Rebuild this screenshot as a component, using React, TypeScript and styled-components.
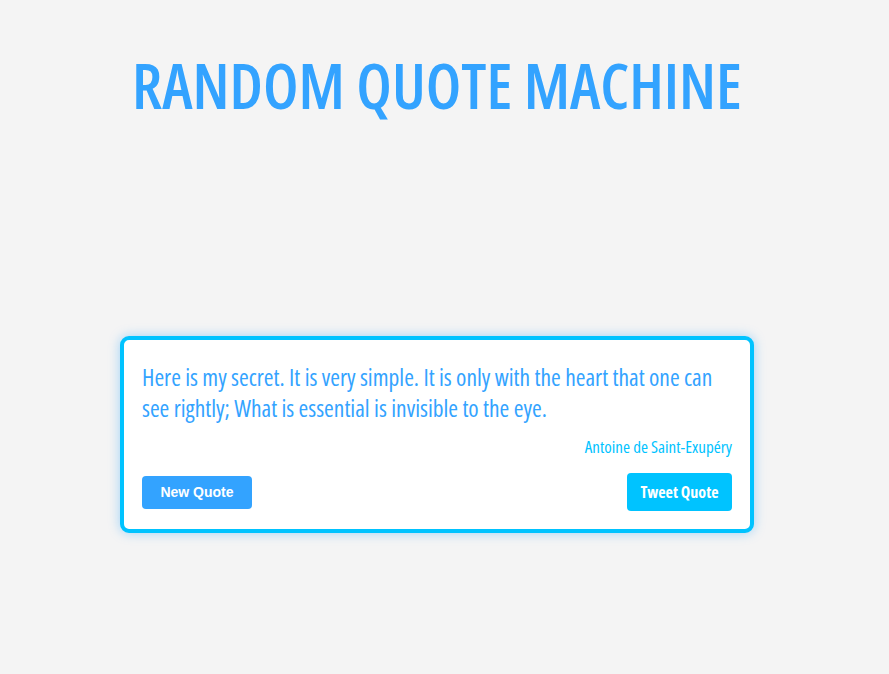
import styled, { createGlobalStyle } from "styled-components";

const quote = {
	text: "Here is my secret. It is very simple. It is only with the heart that one can see rightly; What is essential is invisible to the eye.",
	author: "Antoine de Saint-Exupéry",
};

const GlobalStyle = createGlobalStyle`
	html, body {
		margin: 0;
		padding: 0;
		background: #f4f4f4;
	}
	* {
		box-sizing: border-box;
	}
`;

const narrow = `"Open Sans", "Roboto", sans-serif`;

const Page = styled.main`
	width: 874px;
	min-height: 674px;
	display: flex;
	flex-direction: column;
	align-items: center;
	font-family: ${narrow};
	font-stretch: condensed;
`;

const Title = styled.h1`
	margin: 45px 0 0;
	font-size: 62.5px;
	font-weight: 600;
	line-height: 80px;
	letter-spacing: 0;
	color: #33a3ff;
`;

const Card = styled.section`
	margin-top: 211px;
	width: 634px;
	padding: 22px 18px 18px;
	background: #fff;
	border: 4px solid #00c3ff;
	border-radius: 9px;
	box-shadow: 0 0 12px rgba(0, 150, 255, 0.35);
	display: flex;
	flex-direction: column;
`;

const Text = styled.p`
	margin: 0;
	font-size: 23.5px;
	line-height: 31px;
	color: #33a3ff;
`;

const Author = styled.p`
	margin: 11px 0 0;
	text-align: right;
	font-size: 17px;
	line-height: 24px;
	color: #00c3ff;
`;

const Actions = styled.div`
	margin-top: 14px;
	display: flex;
	justify-content: space-between;
	align-items: center;
`;

const Button = styled.button<{ $tweet?: boolean }>`
	border: none;
	border-radius: 4px;
	color: #fff;
	cursor: pointer;
	font-weight: 700;
	font-size: ${(p) => (p.$tweet ? "16px" : "14px")};
	font-family: ${(p) => (p.$tweet ? narrow : `"Liberation Sans", Arial, sans-serif`)};
	font-stretch: condensed;
	background: ${(p) => (p.$tweet ? "#00c3ff" : "#33a3ff")};
	height: ${(p) => (p.$tweet ? "38px" : "33px")};
	width: ${(p) => (p.$tweet ? "105px" : "110px")};
`;

export default function App() {
	return (
		<>
			<GlobalStyle />
			<Page>
				<Title>RANDOM QUOTE MACHINE</Title>
				<Card>
					<Text>{quote.text}</Text>
					<Author>{quote.author}</Author>
					<Actions>
						<Button>New Quote</Button>
						<Button $tweet>Tweet Quote</Button>
					</Actions>
				</Card>
			</Page>
		</>
	);
}
